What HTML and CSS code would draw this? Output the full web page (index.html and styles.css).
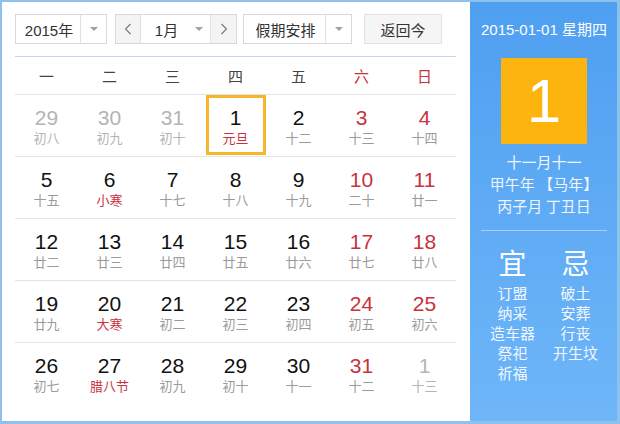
FILE: index.html
```html
<!DOCTYPE html>
<html lang="zh-CN">
<head>
<meta charset="utf-8">
<title>万年历</title>
<link rel="stylesheet" href="styles.css">
</head>
<body>
<div class="frame">
  <div class="main">
    <div class="toolbar">
      <div class="select year">
        <span class="sel-text">2015年</span>
        <span class="sel-arrow"><i class="tri"></i></span>
      </div>
      <div class="month">
        <span class="nav prev"><svg width="8" height="12" viewBox="0 0 8 12"><polyline points="6.5,1 1.5,6 6.5,11" fill="none" stroke="#777" stroke-width="1.1"/></svg></span>
        <span class="month-text">1月</span>
        <span class="month-arrow"><i class="tri"></i></span>
        <span class="nav next"><svg width="8" height="12" viewBox="0 0 8 12"><polyline points="1.5,1 6.5,6 1.5,11" fill="none" stroke="#777" stroke-width="1.1"/></svg></span>
      </div>
      <div class="select holiday">
        <span class="sel-text">假期安排</span>
        <span class="sel-arrow"><i class="tri"></i></span>
      </div>
      <div class="today-btn">返回今</div>
    </div>
    <div class="calendar">
      <div class="week-head">
        <span>一</span><span>二</span><span>三</span><span>四</span><span>五</span><span class="red">六</span><span class="red">日</span>
      </div>
      <div class="week">
        <div class="cell other"><div class="day"><b>29</b><em>初八</em></div></div>
        <div class="cell other"><div class="day"><b>30</b><em>初九</em></div></div>
        <div class="cell other"><div class="day"><b>31</b><em>初十</em></div></div>
        <div class="cell"><div class="day selected"><b>1</b><em class="fest">元旦</em></div></div>
        <div class="cell"><div class="day"><b>2</b><em>十二</em></div></div>
        <div class="cell weekend"><div class="day"><b>3</b><em>十三</em></div></div>
        <div class="cell weekend"><div class="day"><b>4</b><em>十四</em></div></div>
      </div>
      <div class="week">
        <div class="cell"><div class="day"><b>5</b><em>十五</em></div></div>
        <div class="cell"><div class="day"><b>6</b><em class="fest">小寒</em></div></div>
        <div class="cell"><div class="day"><b>7</b><em>十七</em></div></div>
        <div class="cell"><div class="day"><b>8</b><em>十八</em></div></div>
        <div class="cell"><div class="day"><b>9</b><em>十九</em></div></div>
        <div class="cell weekend"><div class="day"><b>10</b><em>二十</em></div></div>
        <div class="cell weekend"><div class="day"><b>11</b><em>廿一</em></div></div>
      </div>
      <div class="week">
        <div class="cell"><div class="day"><b>12</b><em>廿二</em></div></div>
        <div class="cell"><div class="day"><b>13</b><em>廿三</em></div></div>
        <div class="cell"><div class="day"><b>14</b><em>廿四</em></div></div>
        <div class="cell"><div class="day"><b>15</b><em>廿五</em></div></div>
        <div class="cell"><div class="day"><b>16</b><em>廿六</em></div></div>
        <div class="cell weekend"><div class="day"><b>17</b><em>廿七</em></div></div>
        <div class="cell weekend"><div class="day"><b>18</b><em>廿八</em></div></div>
      </div>
      <div class="week">
        <div class="cell"><div class="day"><b>19</b><em>廿九</em></div></div>
        <div class="cell"><div class="day"><b>20</b><em class="fest">大寒</em></div></div>
        <div class="cell"><div class="day"><b>21</b><em>初二</em></div></div>
        <div class="cell"><div class="day"><b>22</b><em>初三</em></div></div>
        <div class="cell"><div class="day"><b>23</b><em>初四</em></div></div>
        <div class="cell weekend"><div class="day"><b>24</b><em>初五</em></div></div>
        <div class="cell weekend"><div class="day"><b>25</b><em>初六</em></div></div>
      </div>
      <div class="week last">
        <div class="cell"><div class="day"><b>26</b><em>初七</em></div></div>
        <div class="cell"><div class="day"><b>27</b><em class="fest">腊八节</em></div></div>
        <div class="cell"><div class="day"><b>28</b><em>初九</em></div></div>
        <div class="cell"><div class="day"><b>29</b><em>初十</em></div></div>
        <div class="cell"><div class="day"><b>30</b><em>十一</em></div></div>
        <div class="cell weekend"><div class="day"><b>31</b><em>十二</em></div></div>
        <div class="cell other"><div class="day"><b>1</b><em>十三</em></div></div>
      </div>
    </div>
  </div>
  <div class="side">
    <div class="side-date">2015-01-01 星期四</div>
    <div class="big-day">1</div>
    <div class="lunar">
      <div>十一月十一</div>
      <div>甲午年 【马年】</div>
      <div>丙子月 丁丑日</div>
    </div>
    <div class="divider"></div>
    <div class="yiji">
      <div class="col">
        <div class="yj-title">宜</div>
        <div class="yj-item">订盟</div>
        <div class="yj-item">纳采</div>
        <div class="yj-item">造车器</div>
        <div class="yj-item">祭祀</div>
        <div class="yj-item">祈福</div>
      </div>
      <div class="col">
        <div class="yj-title">忌</div>
        <div class="yj-item">破土</div>
        <div class="yj-item">安葬</div>
        <div class="yj-item">行丧</div>
        <div class="yj-item">开生坟</div>
      </div>
    </div>
  </div>
</div>
</body>
</html>
```
FILE: styles.css
```css
* { box-sizing: border-box; }
html, body { margin: 0; padding: 0; background: #fff; }
body {
  font-family: "Liberation Sans", "Noto Sans CJK SC", sans-serif;
  color: #333;
}
.frame {
  width: 620px;
  height: 424px;
  display: flex;
  border: 2px solid #8ec2ec;
  border-right-width: 3px;
  border-bottom-width: 3px;
  overflow: hidden;
}
.main {
  width: 468px;
  flex: none;
  padding: 12px 0 0 13px;
  background: #fff;
}
.toolbar {
  display: flex;
  height: 30px;
  align-items: stretch;
}
.select, .month, .today-btn {
  border: 1px solid #d8d8d8;
  background: #fff;
  display: flex;
  align-items: center;
  font-size: 15px;
  color: #333;
}
.year { width: 92px; }
.holiday { width: 109px; margin-left: 6px; }
.sel-text {
  flex: 1;
  text-align: center;
  padding-left: 2px;
  white-space: nowrap;
}
.sel-arrow {
  width: 26px;
  height: 100%;
  border-left: 1px solid #e0e0e0;
  display: flex;
  align-items: center;
  justify-content: center;
}
.tri {
  display: block;
  width: 0;
  height: 0;
  border-left: 4px solid transparent;
  border-right: 4px solid transparent;
  border-top: 4px solid #a0a0a0;
}
.month {
  width: 122px;
  margin-left: 8px;
}
.nav {
  height: 100%;
  display: flex;
  align-items: center;
  justify-content: center;
  background: #f4f4f4;
}
.prev { width: 25px; border-right: 1px solid #e0e0e0; }
.next { width: 26px; border-left: 1px solid #e0e0e0; }
.month-text {
  flex: 1;
  text-align: center;
  padding-left: 4px;
}
.month-arrow {
  width: 22px;
  display: flex;
  justify-content: center;
}
.today-btn {
  width: 78px;
  margin-left: 12px;
  justify-content: center;
  background: #f5f5f5;
  border-color: #e2e2e2;
}
.calendar {
  margin-top: 12px;
  width: 441px;
  border-top: 1px solid #c3d8eb;
}
.week-head {
  display: grid;
  grid-template-columns: repeat(7, 63px);
  height: 38px;
  align-items: center;
  border-bottom: 1px solid #e4e4e4;
  font-family: "Noto Sans CJK SC", sans-serif;
  font-size: 15px;
  color: #444;
  text-align: center;
}
.red { color: #c8323c; }
.week {
  display: grid;
  grid-template-columns: repeat(7, 63px);
  height: 62px;
  border-bottom: 1px solid #e4e4e4;
}
.week.last { border-bottom: none; }
.cell {
  display: flex;
  justify-content: center;
}
.day {
  width: 60px;
  height: 60px;
  border: 3px solid transparent;
  display: flex;
  flex-direction: column;
  align-items: center;
  padding-top: 8px;
}
.day.selected { border-color: #f5b62b; }
.day b {
  font-weight: normal;
  font-size: 21px;
  line-height: 23px;
  color: #111;
}
.day em {
  font-style: normal;
  font-family: "Noto Sans CJK SC", sans-serif;
  font-size: 13px;
  line-height: 18px;
  color: #9a9a9a;
  white-space: nowrap;
}
.day em.fest { color: #c8323c; }
.weekend .day b { color: #c8323c; }
.other .day b { color: #b4b4b4; }
.other .day em { color: #b4b4b4; }
.side {
  flex: 1;
  background: linear-gradient(#4f9ff1, #6eb6f8);
  color: #fff;
  padding: 18px 11px 0;
  display: flex;
  flex-direction: column;
  align-items: center;
}
.side-date {
  font-size: 15px;
  line-height: 20px;
  white-space: nowrap;
}
.big-day {
  margin-top: 18px;
  width: 86px;
  height: 86px;
  background: #fdb40f;
  font-size: 62px;
  line-height: 86px;
  text-align: center;
  color: #fff;
}
.lunar {
  margin-top: 7px;
  font-family: "Noto Sans CJK SC", sans-serif;
  font-size: 15px;
  line-height: 22px;
  text-align: center;
  color: #eef5fe;
  white-space: nowrap;
}
.divider {
  margin-top: 13px;
  width: 100%;
  height: 1px;
  background: #a9d1f7;
}
.yiji {
  margin-top: 13px;
  width: 100%;
  display: flex;
  font-family: "Noto Sans CJK SC", sans-serif;
}
.col {
  flex: 1;
  display: flex;
  flex-direction: column;
  align-items: center;
}
.yj-title {
  font-size: 28px;
  line-height: 36px;
  margin-bottom: 3px;
}
.yj-item {
  font-size: 15px;
  line-height: 20px;
  color: #f2f7fe;
  white-space: nowrap;
}
```
